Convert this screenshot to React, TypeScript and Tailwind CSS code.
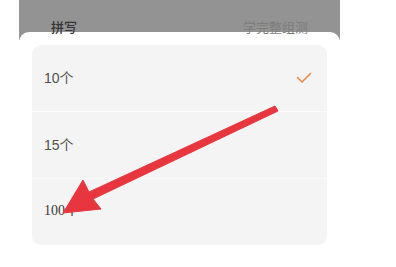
import React from "react";

const sans = { fontFamily: '"Liberation Sans", "Noto Sans CJK SC", sans-serif' };
const serif = { fontFamily: '"Liberation Serif", "Noto Sans CJK SC", serif' };

export default function App() {
  return (
    <div className="relative w-[396px] h-[267px] bg-white overflow-hidden" style={sans}>
      <div className="ml-[19px] w-[321px] h-[40px] bg-[#939393] flex justify-between px-[32px] pt-[20px]">
        <span className="text-[13px] leading-[16px] text-[#353535] font-medium">拼写</span>
        <span className="text-[13px] leading-[16px] text-[#7d7d7d]">学完整组测</span>
      </div>
      <div className="ml-[19px] w-[321px] h-[235px] -mt-[8px] bg-white rounded-t-[10px] px-[13px] pt-[13px]">
        <div className="w-[295px] h-[200px] bg-[#f4f4f4] rounded-[9px] flex flex-col">
          <div className="h-[66px] flex items-center justify-between pl-[12px] pr-[15px]">
            <span className="text-[14px] text-[#505050]">10个</span>
            <svg width="16" height="12" viewBox="0 0 16 12">
              <path d="M1.5 5.5 L6 10 L14.5 1.5" fill="none" stroke="#e88a4c" strokeWidth="1.6" strokeLinecap="round" strokeLinejoin="round" />
            </svg>
          </div>
          <div className="h-px bg-[#fbfbfb]" />
          <div className="h-[66px] flex items-center pl-[12px]">
            <span className="text-[14px] text-[#505050]">15个</span>
          </div>
          <div className="h-px bg-[#fbfbfb]" />
          <div className="h-[66px] flex items-center pl-[12px] pb-[4px]">
            <span className="text-[14px] text-[#3a3a3a]" style={serif}>100个</span>
          </div>
        </div>
      </div>
      <svg className="absolute left-0 top-0" width="396" height="267" viewBox="0 0 396 267">
        <polygon points="63,213 83,180 89,192 275,106 278,111 93,199 101,209" fill="#e8363f" strokeLinejoin="round" stroke="#e8363f" strokeWidth="1" />
      </svg>
    </div>
  );
}
